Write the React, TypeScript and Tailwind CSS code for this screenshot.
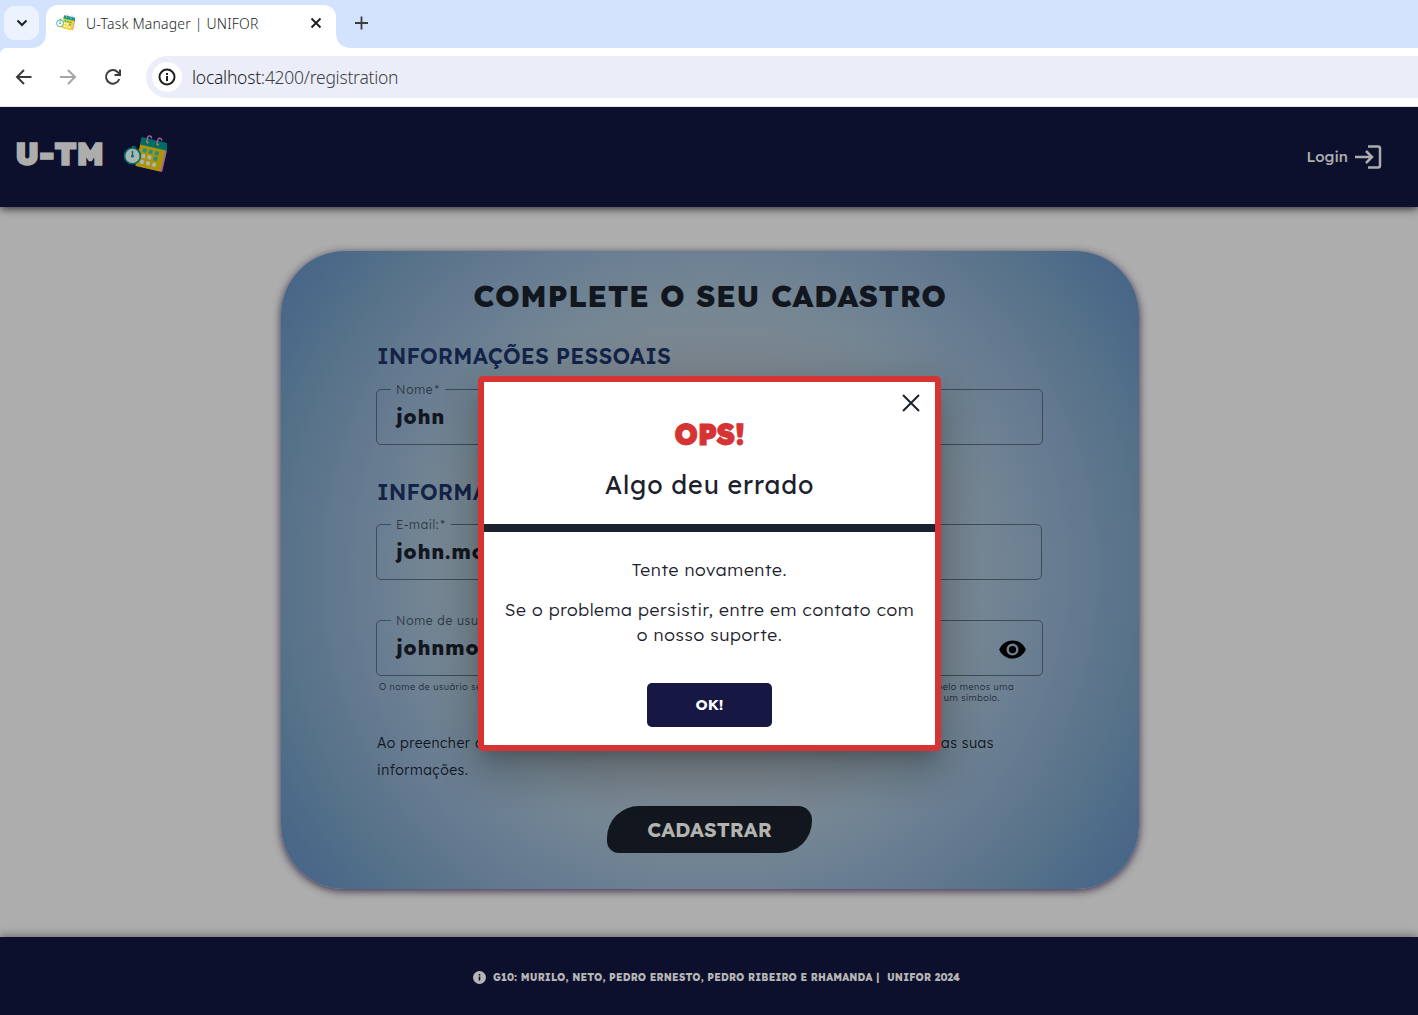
import React from "react";

const LEX = "font-['Lexend','Inter','Open_Sans',sans-serif]";

function Calendar({ className, dim = true }: { className: string; dim?: boolean }) {
  const c = dim
    ? { y: "#ad9308", g: "#006c6a", w: "#a9b5b5", p: "#a4639b", t: "#1c8f8a" }
    : { y: "#f7d51d", g: "#0c9a97", w: "#ffffff", p: "#d98ad0", t: "#25b5ae" };
  return (
    <svg viewBox="0 0 46 40" className={className}>
      <g transform="rotate(13 30 20)">
        <rect x="17" y="6" width="28" height="30" fill={c.p} />
        <rect x="16" y="6" width="27" height="30" fill={c.y} />
        <rect x="16" y="5" width="29" height="8" fill={c.g} />
        <rect x="20" y="16" width="4" height="4" fill={c.t} />
        <rect x="26.5" y="16" width="4" height="4" fill={c.t} />
        <rect x="33" y="16" width="4" height="4" fill={c.t} />
        <rect x="20" y="22" width="4" height="4" fill={c.w} />
        <rect x="26.500" y="22" width="4" height="4" fill={c.w} />
        <rect x="33" y="22" width="4" height="4" fill={c.t} />
        <rect x="20" y="28.500" width="4" height="4" fill={c.w} />
        <rect x="26.500" y="28.500" width="4" height="4" fill={c.w} />
        <rect x="33" y="28.500" width="4" height="4" fill={c.w} />
        <path d="M22 9V4a2 2 0 0 1 4 0M33 9V4a2 2 0 0 1 4 0" fill="none" stroke={c.p} strokeWidth="1.500" />
        <circle cx="23" cy="9" r="1.200" fill={c.y} />
        <circle cx="34" cy="9" r="1.200" fill={c.y} />
      </g>
      <path d="M9 12.500h4M11 12v3" stroke={c.g} strokeWidth="2" />
      <circle cx="9.800" cy="22" r="8.300" fill={c.w} stroke={c.g} strokeWidth="1.700" />
      <path d="M9.800 22.500V16.500" stroke={c.g} strokeWidth="1.500" />
      <circle cx="9.800" cy="22.300" r="1.500" fill={c.g} />
    </svg>
  );
}

function Chrome() {
  return (
    <div className="relative z-20 h-[107px] shrink-0 bg-[#d3e3fd] font-['Noto_Sans'] text-[#1f1f1f]">
      <div className="flex h-12 bg-[#d3e3fd]">
        <div className="flex w-[46px] flex-col">
          <div className="ml-1 mt-1.5 flex h-[34px] w-[35px] shrink-0 items-center justify-center rounded-[11px] bg-[#ecf3fe]">
            <svg width="12" height="8" viewBox="0 0 12 8" className="fill-none stroke-[#1f1f1f] stroke-2">
              <path d="M1.500 1.500 6 6l4.500-4.500" />
            </svg>
          </div>
          <svg width="14" height="14" className="-mt-1.5 block shrink-0 self-end fill-white">
            <path d="M14 0v14H0Q13 13 14 0Z" />
          </svg>
        </div>
        <div className="mt-[5px] flex h-[43px] w-[290px] items-start rounded-t-[12px] bg-white pt-[9px]">
          <Calendar dim={false} className="ml-[10px] h-[17px] w-[19px]" />
          <span className="ml-[11px] w-[220px] whitespace-nowrap text-[14px] leading-[19px] font-light tracking-[0.200px]">U-Task Manager | UNIFOR</span>
          <svg width="12" height="12" viewBox="0 0 12 12" className="mt-[3px] ml-1 stroke-[#1f1f1f] stroke-[1.9]">
            <path d="m1.500 1.500 9 9m0-9-9 9" />
          </svg>
        </div>
        <svg width="14" height="14" className="mt-[34px] fill-white"><path d="M0 0v14h14Q1 13 0 0Z" /></svg>
        <svg width="14" height="14" viewBox="0 0 14 14" className="mt-4 ml-1 stroke-[#3c3c3c] stroke-[1.800]"><path d="M7.500 .5v13M1 7h13" /></svg>
      </div>
      <div className="flex h-[58px] items-center rounded-tl-[6px] bg-white">
        <svg width="18" height="18" viewBox="0 0 18 18" className="ml-[15px] fill-none stroke-[#3c3c3c] stroke-2"><path d="M16.500 9H2.500M9 2 2 9l7 7" /></svg>
        <svg width="18" height="18" viewBox="0 0 18 18" className="ml-[27px] fill-none stroke-[#a6a6a6] stroke-2"><path d="M0 9h14M8 2l7 7-7 7" /></svg>
        <svg width="18" height="18" viewBox="0 0 18 18" className="ml-[26px] fill-none stroke-[#3c3c3c] stroke-2">
          <path d="M15.300 11A6.800 6.800 0 1 1 13.800 4.200L16 6.500M16 1.500V7h-5.500" />
        </svg>
        <div className="ml-[24px] flex h-[42px] flex-1 items-center rounded-l-full bg-[#ebeef8] pl-1.5">
          <div className="flex h-[30px] w-[30px] items-center justify-center rounded-full bg-white">
            <svg width="18" height="18" viewBox="0 0 18 18" className="fill-none stroke-[#1f1f1f] stroke-2">
              <circle cx="9" cy="9" r="7.500" /><path d="M9 8v5M9 5v2" />
            </svg>
          </div>
          <span className="ml-[10px] text-[17.500px] font-light tracking-[-0.250px] whitespace-nowrap">
            localhost<span className="text-[#3d4047]">:4200/registration</span>
          </span>
        </div>
      </div>
      <div className="h-px bg-[#e4e5e9]" />
    </div>
  );
}

function Field({ label, value, width, labelSpacing, hint, eye }: { label: string; value: string; width: string; labelSpacing: string; hint?: boolean; eye?: boolean }) {
  return (
    <fieldset className={`${width} h-[63px] rounded-[5px] border border-[#3c4c58] pl-[14px]`}>
      <legend className={`h-[14px] whitespace-nowrap px-[5px] text-[12px] leading-[16px] font-light text-[#2b3845] ${labelSpacing}`}>
        {label}{!hint && <sup className="top-0 ml-px text-[13px] leading-none">*</sup>}
      </legend>
      <div className="flex items-center justify-between pt-px pr-[15px] pl-[5px]">
        <span className="text-[20px] leading-[40px] font-extrabold tracking-[0.800px] text-[#12171f]">{value}</span>
        {eye && (
          <svg width="29" height="29" viewBox="0 0 24 24" className="mt-[3px] fill-black">
            <path d="M12 4.500C7 4.500 2.730 7.610 1 12c1.730 4.390 6 7.500 11 7.500s9.270-3.110 11-7.500c-1.730-4.390-6-7.500-11-7.500ZM12 17a5 5 0 1 1 0-10 5 5 0 0 1 0 10Zm0-8a3 3 0 1 0 0 6 3 3 0 0 0 0-6Z" />
          </svg>
        )}
      </div>
    </fieldset>
  );
}

function Dialog() {
  return (
    <div role="dialog" className="absolute top-[376px] left-[478px] flex h-[375px] w-[463px] flex-col rounded-[5px] border-[6px] border-[#d63333] bg-white text-center text-[#1c212e] shadow-[0_11px_15px_-7px_rgba(0,0,0,0.2),0_24px_38px_3px_rgba(0,0,0,0.14),0_9px_46px_8px_rgba(0,0,0,0.12)]">
      <div className="flex h-[38px] justify-end pt-3 pr-[15px]">
        <svg width="18" height="18" viewBox="0 0 18 18" className="shrink-0 stroke-[#1c212e] stroke-2"><path d="m1 1 16 16M17 1 1 17" /></svg>
      </div>
      <h2 className="h-[43px] text-[28.500px] leading-[28px] font-black tracking-[-0.300px] text-[#d63333] [-webkit-text-stroke:0.800px_#d63333]">OPS!</h2>
      <h3 className="h-[61px] text-[25px] leading-[44px] font-normal tracking-[0.900px]">Algo deu errado</h3>
      <div className="h-2 bg-[#1c212e]" />
      <p className="mt-[24px] text-[17.500px] leading-[26px] font-light tracking-[0.620px]">Tente novamente.</p>
      <p className="mt-[15px] text-[17.500px] leading-[25px] font-light tracking-[0.620px]">Se o problema persistir, entre em contato com<br />o nosso suporte.</p>
      <button className="mx-auto mt-[36px] h-11 w-[125px] shrink-0 rounded-[5px] bg-[#171744] text-[15px] font-bold text-white">OK!</button>
    </div>
  );
}

export default function App() {
  return (
    <div className={`relative flex h-[1015px] w-[1418px] flex-col overflow-hidden ${LEX}`}>
      <Chrome />
      <header className="z-10 flex h-[100px] shrink-0 items-center bg-[#0d102d] pl-4 text-[#adadad] shadow-[0_2px_8px_rgba(0,0,0,0.7)]">
        <span className="mt-[-6px] ml-[-1px] w-[89px] text-[31px] font-black tracking-[0px] whitespace-nowrap [-webkit-text-stroke:1.600px_#adadad]">U-TM</span>
        <Calendar className="mt-[-7px] ml-[19px] h-[38px] w-[44px]" />
        <div className="ml-auto flex items-center pr-9">
          <span className="text-[15px] font-medium">Login</span>
          <svg width="28" height="26" viewBox="0 0 28 26" className="ml-1.5 fill-none stroke-[#adadad] stroke-[2.500]">
            <path d="M1 13h17M12 7l6 6-6 6M14 2.500h10a2 2 0 0 1 2 2v17a2 2 0 0 1-2 2H14" />
          </svg>
        </div>
      </header>
      <main className="flex h-[730px] shrink-0 justify-center bg-[#adadad] pt-11">
        <section className="ml-[2px] h-[638px] w-[858px] rounded-[64px] bg-[radial-gradient(circle_farthest-corner,#81858a_0%,#7e878f_35%,#768793_50%,#6c8093_60%,#677b91_66%,#567289_81%,#4a6989_92%,#466486_100%)] px-[95px] shadow-[0_2px_9px_0_rgba(30,15,50,0.8)]">
          <h1 className="mt-[27px] text-center text-[30px] leading-9 font-extrabold tracking-[0.600px] whitespace-nowrap text-[#12171f]">COMPLETE O SEU CADASTRO</h1>
          <h2 className="mt-[28px] pl-px text-[22px] leading-7 font-semibold tracking-[0.140px] whitespace-nowrap text-[#142449]">INFORMAÇÕES PESSOAIS</h2>
          <div className="mt-[12px]"><Field label="Nome" value="john" width="w-[667px]" labelSpacing="tracking-[0.700px]" /></div>
          <h2 className="mt-[33px] pl-px text-[22px] leading-7 font-semibold tracking-[0.140px] whitespace-nowrap text-[#142449]">INFORMAÇÕES</h2>
          <div className="mt-[11px]"><Field label="E-mail:" value="john.mo" width="w-[666px]" labelSpacing="tracking-[0.600px]" /></div>
          <div className="mt-[33px]"><Field label="Nome de usuário" value="johnmo" width="w-[667px]" labelSpacing="tracking-[0.700px]" hint eye /></div>
          <div className="mt-[5px] flex h-[24px] justify-between pr-[30px] pl-[3px] text-[9px] leading-[11px] font-light tracking-[0.500px] text-[#202b38]">
            <span>O nome de usuário será</span>
            <span className="whitespace-nowrap">pelo menos uma<br /><span className="pl-[7px]">um símbolo.</span></span>
          </div>
          <div className="mt-[25px] h-[54px] pl-px text-[14px] leading-[27px] font-light tracking-[0.500px] text-[#101522]">
            <div className="flex justify-between pr-[50px]"><span>Ao preencher o</span><span>as suas</span></div>
            <div>informações.</div>
          </div>
          <button className="mt-[22px] ml-[231px] block h-[47px] w-[205px] rounded-tl-[32px] rounded-tr-[14px] rounded-br-[32px] rounded-bl-[12px] bg-[#12171f] text-[20px] font-bold text-[#b3b3b0]">CADASTRAR</button>
        </section>
      </main>
      <footer className="z-10 flex flex-1 items-center justify-center bg-[#0d102d] pt-[3px] text-[#b5b5b5] shadow-[0_-2px_8px_rgba(0,0,0,0.35)]">
        <svg width="13" height="13" viewBox="0 0 13 13" className="mr-[7px] ml-[15px]"><circle cx="6.500" cy="6.500" r="6.500" fill="#b5b5b5" /><path d="M6.500 5.500v4M6.500 3v1.500" stroke="#0d102d" strokeWidth="1.600" /></svg>
        <span className="text-[10px] font-extrabold tracking-[0.170px] whitespace-pre">G10: MURILO, NETO, PEDRO ERNESTO, PEDRO RIBEIRO E RHAMANDA |  UNIFOR 2024</span>
      </footer>
      <Dialog />
    </div>
  );
}
